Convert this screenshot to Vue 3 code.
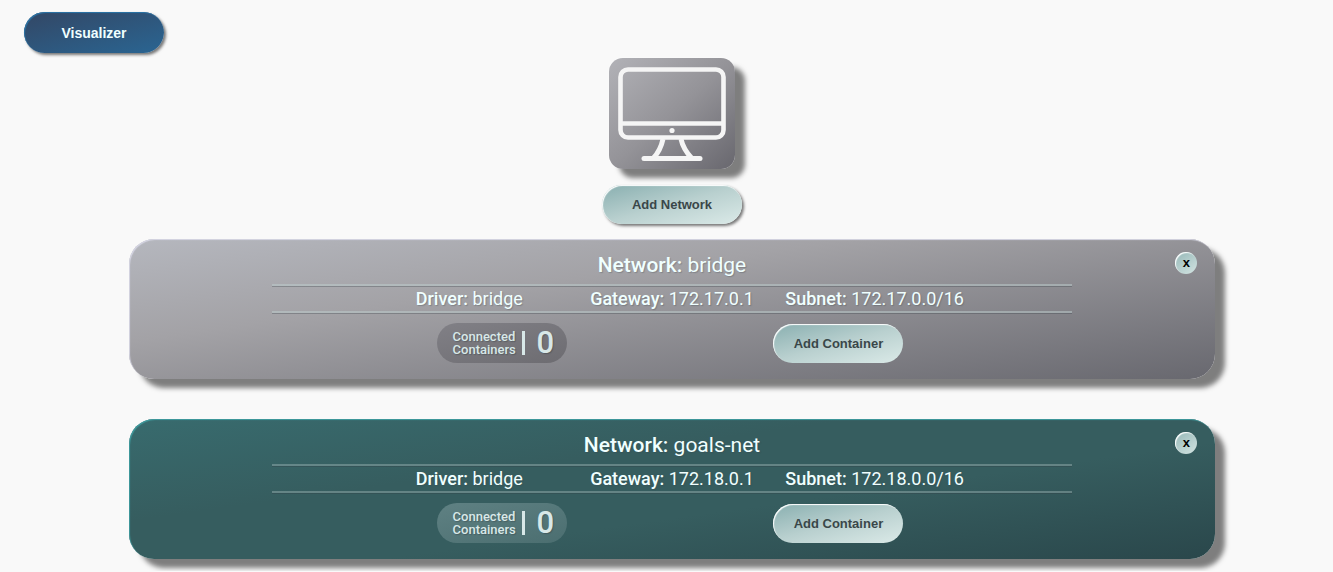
<script setup>
const networks = [
  { name: 'bridge', driver: 'bridge', gateway: '172.17.0.1', subnet: '172.17.0.0/16', containers: 0, theme: 'host' },
  { name: 'goals-net', driver: 'bridge', gateway: '172.18.0.1', subnet: '172.18.0.0/16', containers: 0, theme: 'custom' },
]
</script>

<template>
  <div class="page">
    <header class="top">
      <button class="visualizer" type="button">Visualizer</button>
    </header>
    <main class="content">
      <div class="host-tile">
        <svg viewBox="0 0 126 111" role="img" aria-label="Host computer" fill="none" stroke="#f5f5f5">
          <rect x="11.5" y="11.5" width="103" height="68" rx="7.5" stroke-width="4.6" />
          <path d="M12 65.5H114" stroke-width="4.6" />
          <circle cx="63" cy="72.5" r="2.6" fill="#f5f5f5" stroke="none" />
          <path d="M54 81C52.5 88 50 94 44.5 100M72 81C73.5 88 77 94 82.5 100" stroke-width="5" />
          <path d="M35 100.5H91" stroke-width="5" stroke-linecap="round" />
        </svg>
      </div>
      <button class="pale add-network" type="button">Add Network</button>

      <section v-for="net in networks" :key="net.name" class="card" :class="net.theme">
        <button class="close" type="button" :aria-label="`Remove ${net.name}`">x</button>
        <h2><b>Network:</b> {{ net.name }}</h2>
        <div class="details">
          <div class="detail-grid">
            <span><b>Driver:</b> {{ net.driver }}</span>
            <span><b>Gateway:</b> {{ net.gateway }}</span>
            <span><b>Subnet:</b> {{ net.subnet }}</span>
          </div>
        </div>
        <div class="actions">
          <div class="count">
            <span class="count-label">Connected<br />Containers</span>
            <span class="count-number">{{ net.containers }}</span>
          </div>
          <button class="pale add-container" type="button">Add Container</button>
        </div>
      </section>
    </main>
  </div>
</template>

<style>
html,
body {
  background: #f9f9f9;
}
body {
  margin: 0;
}
</style>

<style scoped>
.page {
  font-family: Roboto, "Liberation Sans", sans-serif;
}
button {
  font-family: "Liberation Sans", Arial, sans-serif;
  font-weight: 700;
  border: 0;
  padding: 0;
  cursor: pointer;
}
.top {
  padding: 12px 24px 0;
}
.visualizer {
  display: block;
  width: 140px;
  height: 41px;
  border-radius: 21px;
  color: azure;
  font-size: 14px;
  background: linear-gradient(165deg, #334765, #2a6592);
  box-shadow: inset 1px 1px 1px #2a75a8, 2px 2px 3px #777;
}
.content {
  display: flex;
  flex-direction: column;
  align-items: center;
  gap: 40px;
  padding: 5px 0 12px 11px;
}
.host-tile {
  width: 126px;
  margin-bottom: -24px;
  border-radius: 14px;
  background: linear-gradient(to bottom right, #b2b2b7, #949398 50%, #68676e);
  box-shadow: 10px 9px 5px #7e7e7e, 0 0 2px #fff;
}
.host-tile svg {
  display: block;
  width: 100%;
}
.pale {
  color: #3a4749;
  font-size: 13px;
  background: linear-gradient(165deg, #89afb0, #b9d0cf 50%, #dbeae8);
}
.add-network {
  width: 140px;
  height: 39px;
  margin-bottom: -25px;
  border-radius: 20px;
  box-shadow: inset 1px 1px 1px #fff, 2px 2px 3px #777;
}
.card {
  position: relative;
  box-sizing: border-box;
  width: 82.2%;
  min-height: 140px;
  border-radius: 25px;
  color: azure;
  display: flex;
  flex-direction: column;
  align-items: center;
}
.host {
  background: linear-gradient(172deg, #b5b7be, #a3a2a6 35%, #68686f);
  box-shadow: inset 1px 1px 1px #d6d6e4, 10px 9px 5px #7e7e7e;
}
.custom {
  background: linear-gradient(172deg, #386b6e, #365d5f 35%, #365d5f 60%, #2a474b);
  box-shadow: inset 1px 1px 1px #3f9da0, 10px 9px 5px #7e7e7e;
}
.close {
  position: absolute;
  top: 13px;
  right: 18px;
  width: 22px;
  height: 22px;
  border-radius: 50%;
  color: #000;
  font-size: 13px;
  line-height: 22px;
  background: linear-gradient(145deg, #94b7b7, #d4e4e2);
  box-shadow: inset 1px 1px 1px #fff;
}
h2 {
  margin: 14px 0 6px;
  font-size: 21px;
  font-weight: 400;
  line-height: 25px;
  text-shadow: 1px 1px 1px rgba(60, 70, 75, 0.3);
}
b {
  font-weight: 500;
}
.details {
  width: 800px;
  max-width: 90%;
  border: solid rgba(190, 205, 205, 0.5);
  border-width: 2px 0;
  box-shadow: 0 1px rgba(50, 60, 65, 0.3), inset 0 1px rgba(50, 60, 65, 0.3);
}
.custom .details {
  border-color: rgba(190, 205, 205, 0.35);
}
.detail-grid {
  display: grid;
  grid-template-columns: repeat(3, 1fr);
  width: 76%;
  margin: 0 auto;
  font-size: 18px;
  line-height: 25px;
  text-align: center;
  white-space: nowrap;
  text-shadow: 1px 1px 1px rgba(60, 70, 75, 0.3);
}
.actions {
  display: grid;
  grid-template-columns: 1fr 1fr;
  justify-items: center;
  align-items: center;
  width: 62%;
  margin-top: 10px;
  padding-right: 4px;
}
.count {
  display: flex;
  align-items: center;
  box-sizing: border-box;
  width: 130px;
  height: 40px;
  padding-left: 16px;
  border-radius: 20px;
  color: #d8e8e8;
  font-weight: 500;
  text-shadow: 1px 1px 1px rgba(50, 60, 65, 0.4);
}
.host .count {
  background: linear-gradient(165deg, #818086, #6d6c71);
}
.custom .count {
  background: linear-gradient(165deg, #5f8183, #4b6e70);
}
.count-label {
  font-size: 13px;
  line-height: 13px;
  width: 69px;
}
.count-number {
  border-left: 3px solid #d8e8e8;
  padding-left: 12px;
  font-size: 31px;
  line-height: 24px;
}
.add-container {
  width: 130px;
  height: 39px;
  border-radius: 20px;
  box-shadow: inset 1px 1px 1px #fff;
}
</style>
